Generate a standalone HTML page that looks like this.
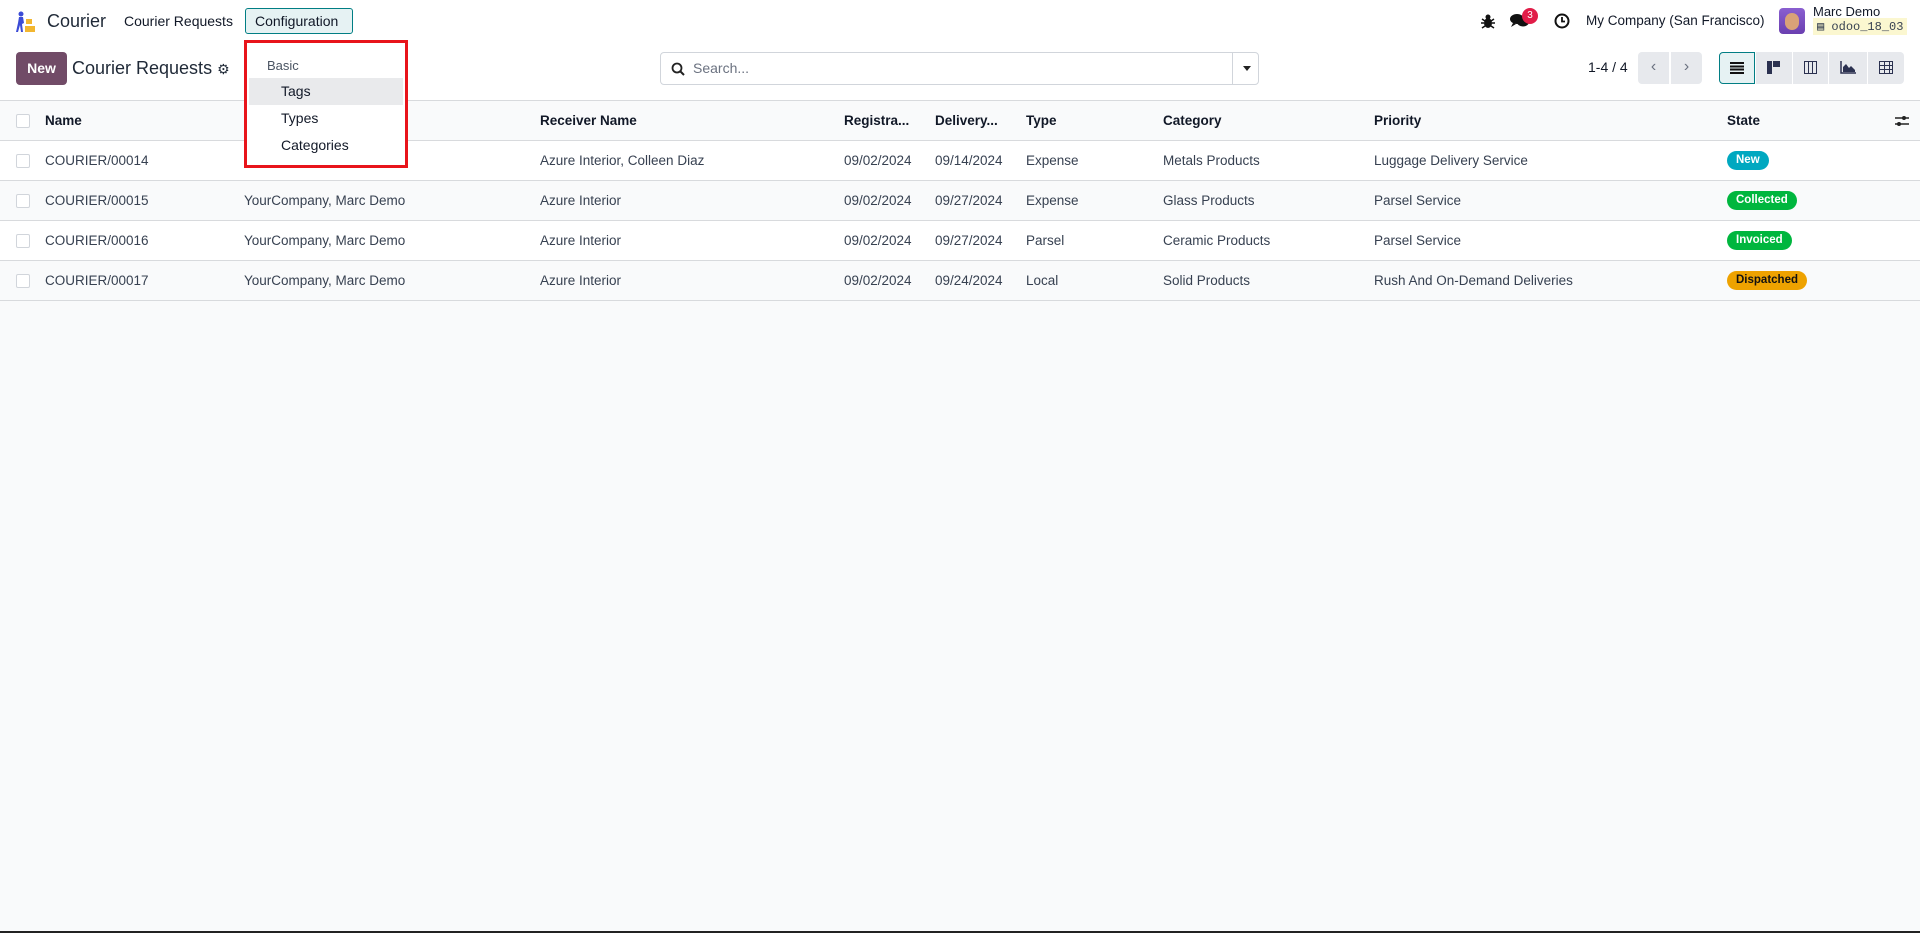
<!DOCTYPE html>
<html><head><meta charset="utf-8"><style>
*{box-sizing:border-box;margin:0;padding:0}
body{width:1920px;height:933px;overflow:hidden;background:#f9fafb;font-family:"Liberation Sans",sans-serif;font-size:13.5px;color:#374151;position:relative}
.a{position:absolute;white-space:nowrap}
.nav{position:absolute;left:0;top:0;width:1920px;height:46px;background:#fff}
.cp{position:absolute;left:0;top:46px;width:1920px;height:55px;background:#fff;border-bottom:1px solid #d8dadd}
.th{position:absolute;left:0;top:101px;width:1920px;height:40px;background:#f9fafb;border-bottom:1px solid #d8dadd;font-weight:bold;color:#111827}
.row{position:absolute;left:0;width:1920px;height:40px;border-bottom:1px solid #d8dadd}
.cb{position:absolute;left:16px;top:13px;width:14px;height:14px;border:1px solid #d1d5db;background:#fff;border-radius:2px}
.c{position:absolute;top:12px;white-space:nowrap}
.badge{position:absolute;top:10px;height:19px;border-radius:10px;color:#fff;font-weight:bold;font-size:11.5px;line-height:19px;padding:0 9px}
.vb{position:absolute;top:52px;height:32px;background:#e7e9ed;border-radius:0}
</style></head><body>
<div class="nav">
<svg class="a" style="left:16px;top:11px" width="20" height="22" viewBox="0 0 20 22"><circle cx="5" cy="3" r="2.5" fill="#3b4bd6"/><path d="M3 6h4l1 6-2 1 1 8H5l-1-7-2 7H0l2-9z" fill="#3b4bd6"/><rect x="10" y="8" width="6" height="5" fill="#f2b630"/><rect x="9" y="15" width="10" height="6" fill="#f2b630"/></svg>
<div class="a" style="left:47px;top:11px;font-size:18px;color:#1f2937">Courier</div>
<div class="a" style="left:124px;top:13px;font-size:14px;color:#111827">Courier Requests</div>
<div class="a" style="left:245px;top:8px;width:108px;height:26px;border:1px solid #017e84;background:#e6f2f3;border-radius:3px;font-size:14px;color:#111827;padding:4px 0 0 9px">Configuration</div>
<svg class="a" style="left:1481px;top:13px" width="14" height="16" viewBox="0 0 14 16"><ellipse cx="7" cy="10" rx="4" ry="5" fill="#111"/><circle cx="7" cy="4" r="2.5" fill="#111"/><path d="M1 6l3 2M13 6l-3 2M0 10h3M14 10h-3M1 15l3-2M13 15l-3-2" stroke="#111" stroke-width="1.5"/></svg>
<svg class="a" style="left:1509px;top:13px" width="22" height="16" viewBox="0 0 22 16"><ellipse cx="8" cy="6" rx="7" ry="5" fill="#111"/><path d="M4 10l-2 4 5-3z" fill="#111"/><ellipse cx="14" cy="9" rx="6" ry="4.5" fill="#111"/></svg>
<div class="a" style="left:1522px;top:8px;width:16px;height:16px;border-radius:8px;background:#e11d48;color:#fff;font-size:10px;text-align:center;line-height:16px">3</div>
<svg class="a" style="left:1554px;top:13px" width="16" height="16" viewBox="0 0 16 16"><circle cx="8" cy="8" r="6.5" fill="none" stroke="#111" stroke-width="2"/><path d="M8 4v4.5h3" stroke="#111" stroke-width="1.8" fill="none"/></svg>
<div class="a" style="left:1586px;top:13px;font-size:13.5px;color:#111827">My Company (San Francisco)</div>
<div class="a" style="left:1779px;top:8px;width:26px;height:26px;border-radius:4px;background:linear-gradient(#8a5fd0,#6a3fb0)"><div style="position:absolute;left:6px;top:5px;width:14px;height:17px;border-radius:7px;background:#d9a178"></div></div>
<div class="a" style="left:1813px;top:4px;font-size:13px;color:#111827">Marc Demo</div>
<div class="a" style="left:1813px;top:18px;height:17px;background:#fbf7d0;font-family:'Liberation Mono',monospace;font-size:12px;color:#374151;padding:1px 4px">▤ odoo_18_03</div>
</div>
<div class="cp"></div>
<div class="a" style="left:16px;top:52px;width:51px;height:33px;background:#714b67;border-radius:4px;color:#fff;font-weight:bold;font-size:14px;text-align:center;line-height:33px">New</div>
<div class="a" style="left:72px;top:58px;font-size:18px;color:#1f2937">Courier Requests <span style="font-size:14px">⚙</span></div>
<div class="a" style="left:660px;top:52px;width:599px;height:33px;border:1px solid #d1d5db;border-radius:4px;background:#fff">
<svg style="position:absolute;left:10px;top:9px" width="14" height="14" viewBox="0 0 14 14"><circle cx="6" cy="6" r="4.5" fill="none" stroke="#222" stroke-width="1.8"/><path d="M9.5 9.5l3.5 3.5" stroke="#222" stroke-width="2"/></svg>
<div style="position:absolute;left:32px;top:7px;color:#6b7280;font-size:14px">Search...</div>
<div style="position:absolute;left:571px;top:0;width:1px;height:31px;background:#d1d5db"></div>
<div style="position:absolute;left:582px;top:13px;border:4.5px solid transparent;border-top:5px solid #222"></div>
</div>
<div class="a" style="left:1588px;top:59px;font-size:14px;color:#111827">1-4 / 4</div>
<div class="vb" style="left:1638px;width:31px;border-radius:4px 0 0 4px;color:#6b7280;font-size:16px;text-align:center;line-height:30px">‹</div>
<div class="vb" style="left:1671px;width:31px;border-radius:0 4px 4px 0;color:#6b7280;font-size:16px;text-align:center;line-height:30px">›</div>
<div class="vb" style="left:1719px;width:36px;background:#e6f2f3;border:1px solid #017e84;border-radius:4px 0 0 4px"><div style="position:absolute;left:10px;top:9px;width:14px;height:12px;background:repeating-linear-gradient(#111 0 2px,transparent 2px 3.3px)"></div></div>
<div class="vb" style="left:1756px;width:36px"><div style="position:absolute;left:11px;top:9px;width:5px;height:13px;background:#2b3150"></div><div style="position:absolute;left:17px;top:9px;width:7px;height:6px;background:#2b3150"></div></div>
<div class="vb" style="left:1793px;width:35px"><div style="position:absolute;left:11px;top:9px;width:13px;height:13px;border:1.5px solid #2b3150;background:repeating-linear-gradient(90deg,transparent 0 3px,#2b3150 3px 4px)"></div></div>
<div class="vb" style="left:1829px;width:38px"><svg style="position:absolute;left:11px;top:9px" width="16" height="13"><path d="M1 0v12h15" stroke="#2b3150" stroke-width="1.5" fill="none"/><path d="M3 11V6l3-3 3 4 2-2 4 4v2z" fill="#2b3150"/></svg></div>
<div class="vb" style="left:1868px;width:36px;border-radius:0 4px 4px 0"><div style="position:absolute;left:11px;top:9px;width:14px;height:13px;border:1.5px solid #2b3150;background:repeating-linear-gradient(90deg,transparent 0 4px,#2b3150 4px 5px),repeating-linear-gradient(transparent 0 3px,#2b3150 3px 4px)"></div></div>

<div class="th"><div class="cb"></div>
<div class="c" style="left:45px">Name</div><div class="c" style="left:540px">Receiver Name</div><div class="c" style="left:844px">Registra...</div><div class="c" style="left:935px">Delivery...</div><div class="c" style="left:1026px">Type</div><div class="c" style="left:1163px">Category</div><div class="c" style="left:1374px">Priority</div><div class="c" style="left:1727px">State</div>
<svg style="position:absolute;left:1895px;top:14px" width="14" height="12"><path d="M0 3h14M0 9h14" stroke="#222" stroke-width="1.5"/><circle cx="9" cy="3" r="2" fill="#222"/><circle cx="4" cy="9" r="2" fill="#222"/></svg></div>

<div class="row" style="top:141px;background:#fff"><div class="cb"></div><div class="c" style="left:45px">COURIER/00014</div><div class="c" style="left:244px">YourCompany, Marc Demo</div><div class="c" style="left:540px">Azure Interior, Colleen Diaz</div><div class="c" style="left:844px">09/02/2024</div><div class="c" style="left:935px">09/14/2024</div><div class="c" style="left:1026px">Expense</div><div class="c" style="left:1163px">Metals Products</div><div class="c" style="left:1374px">Luggage Delivery Service</div><div class="badge" style="left:1727px;background:#00a8c0">New</div></div>
<div class="row" style="top:181px;background:#f9fafb"><div class="cb"></div><div class="c" style="left:45px">COURIER/00015</div><div class="c" style="left:244px">YourCompany, Marc Demo</div><div class="c" style="left:540px">Azure Interior</div><div class="c" style="left:844px">09/02/2024</div><div class="c" style="left:935px">09/27/2024</div><div class="c" style="left:1026px">Expense</div><div class="c" style="left:1163px">Glass Products</div><div class="c" style="left:1374px">Parsel Service</div><div class="badge" style="left:1727px;background:#00b63e">Collected</div></div>
<div class="row" style="top:221px;background:#fff"><div class="cb"></div><div class="c" style="left:45px">COURIER/00016</div><div class="c" style="left:244px">YourCompany, Marc Demo</div><div class="c" style="left:540px">Azure Interior</div><div class="c" style="left:844px">09/02/2024</div><div class="c" style="left:935px">09/27/2024</div><div class="c" style="left:1026px">Parsel</div><div class="c" style="left:1163px">Ceramic Products</div><div class="c" style="left:1374px">Parsel Service</div><div class="badge" style="left:1727px;background:#00b63e">Invoiced</div></div>
<div class="row" style="top:261px;background:#f9fafb"><div class="cb"></div><div class="c" style="left:45px">COURIER/00017</div><div class="c" style="left:244px">YourCompany, Marc Demo</div><div class="c" style="left:540px">Azure Interior</div><div class="c" style="left:844px">09/02/2024</div><div class="c" style="left:935px">09/24/2024</div><div class="c" style="left:1026px">Local</div><div class="c" style="left:1163px">Solid Products</div><div class="c" style="left:1374px">Rush And On-Demand Deliveries</div><div class="badge" style="left:1727px;background:#eea200;color:#111">Dispatched</div></div>

<div class="a" style="left:244px;top:40px;width:164px;height:128px;background:#fff;border:3px solid #e8141b">
<div class="a" style="left:20px;top:15px;font-size:13px;color:#4b5563">Basic</div>
<div class="a" style="left:2px;top:35px;width:154px;height:27px;background:#e9eaec"></div>
<div class="a" style="left:34px;top:40px;font-size:14px;color:#111827">Tags</div>
<div class="a" style="left:34px;top:67px;font-size:14px;color:#111827">Types</div>
<div class="a" style="left:34px;top:94px;font-size:14px;color:#111827">Categories</div>
</div>
<div class="a" style="left:0;top:931px;width:1920px;height:2px;background:#222"></div>
</body></html>
